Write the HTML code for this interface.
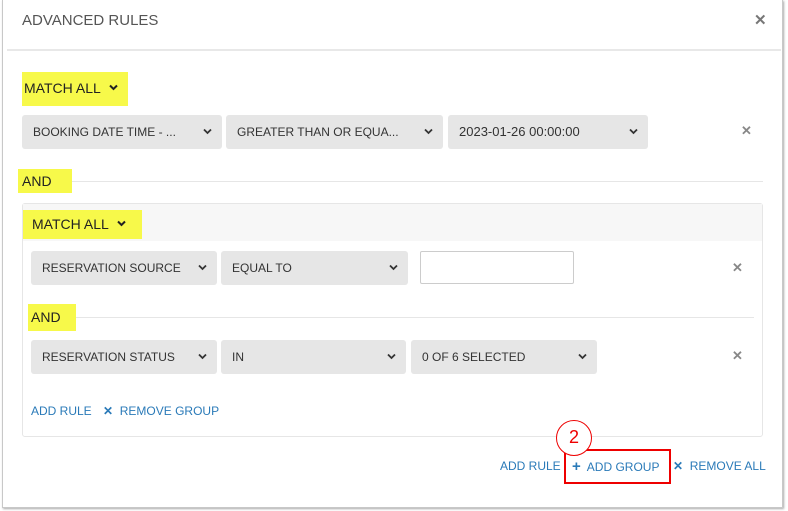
<!DOCTYPE html>
<html><head><style>
body{margin:0;width:788px;height:511px;background:#fff;font-family:"Liberation Sans",sans-serif;position:relative;overflow:hidden}
.a{position:absolute}
.modal{left:2px;top:0;width:779px;height:507px;border:1px solid #c8c8c8;border-top:none;box-shadow:1px 1px 2px #aaa}
.sel{position:absolute;height:34px;background:#e6e6e6;border-radius:3px;font-size:12px;color:#333;line-height:34px;padding-left:11px;box-sizing:border-box}
.sel svg{position:absolute;right:10px;top:13px}
.hl{position:absolute;background:#f7f94a;font-size:14px;color:#222;box-sizing:border-box;padding-left:2px}
.hl svg{margin-left:8px;vertical-align:2px}
.x{position:absolute;color:#888;font-size:13px;font-weight:bold}
.lnk{position:absolute;color:#2a7ab8;font-size:12px}
.line{position:absolute;height:1px;background:#e6e6e6}
</style></head><body>
<div class="a modal"></div>
<div class="a" style="left:22px;top:12px;font-size:15px;color:#555">ADVANCED RULES</div>
<div class="x" style="left:754px;top:11px;font-size:15px;color:#777">✕</div>
<div class="line" style="left:7px;top:49px;width:774px;height:2px;background:#e8e8e8"></div>

<div class="hl" style="left:22px;top:72px;width:106px;height:34px;line-height:32px">MATCH ALL<svg width="9" height="7"><path d="M1 1.5L4.5 5L8 1.5" stroke="#222" stroke-width="2" fill="none"/></svg></div>
<div class="sel" style="left:22px;top:115px;width:200px">BOOKING DATE TIME - ...<svg width="9" height="7"><path d="M1 1.5L4.5 5L8 1.5" stroke="#333" stroke-width="1.8" fill="none"/></svg></div>
<div class="sel" style="left:226px;top:115px;width:217px">GREATER THAN OR EQUA...<svg width="9" height="7"><path d="M1 1.5L4.5 5L8 1.5" stroke="#333" stroke-width="1.8" fill="none"/></svg></div>
<div class="sel" style="left:448px;top:115px;width:200px;font-size:13px">2023-01-26 00:00:00<svg width="9" height="7"><path d="M1 1.5L4.5 5L8 1.5" stroke="#333" stroke-width="1.8" fill="none"/></svg></div>
<div class="x" style="left:741px;top:123px">✕</div>

<div class="hl" style="left:18px;top:169px;width:54px;height:24px;line-height:24px;padding-left:4px">AND</div>
<div class="line" style="left:72px;top:181px;width:691px"></div>

<div class="a" style="left:22px;top:203px;width:741px;height:234px;border:1px solid #e6e6e6;box-sizing:border-box;border-radius:3px"></div>
<div class="a" style="left:23px;top:204px;width:739px;height:37px;background:#f7f7f7"></div>
<div class="hl" style="left:23px;top:210px;width:119px;height:29px;line-height:28px;padding-left:9px">MATCH ALL<svg width="9" height="7"><path d="M1 1.5L4.5 5L8 1.5" stroke="#222" stroke-width="2" fill="none"/></svg></div>

<div class="sel" style="left:31px;top:251px;width:186px">RESERVATION SOURCE<svg width="9" height="7"><path d="M1 1.5L4.5 5L8 1.5" stroke="#333" stroke-width="1.8" fill="none"/></svg></div>
<div class="sel" style="left:221px;top:251px;width:187px">EQUAL TO<svg width="9" height="7"><path d="M1 1.5L4.5 5L8 1.5" stroke="#333" stroke-width="1.8" fill="none"/></svg></div>
<div class="a" style="left:420px;top:251px;width:154px;height:33px;border:1px solid #ccc;box-sizing:border-box;border-radius:2px"></div>
<div class="x" style="left:732px;top:260px">✕</div>

<div class="hl" style="left:28px;top:304px;width:48px;height:27px;line-height:27px;padding-left:3px">AND</div>
<div class="line" style="left:76px;top:317px;width:678px"></div>

<div class="sel" style="left:31px;top:340px;width:186px">RESERVATION STATUS<svg width="9" height="7"><path d="M1 1.5L4.5 5L8 1.5" stroke="#333" stroke-width="1.8" fill="none"/></svg></div>
<div class="sel" style="left:221px;top:340px;width:185px">IN<svg width="9" height="7"><path d="M1 1.5L4.5 5L8 1.5" stroke="#333" stroke-width="1.8" fill="none"/></svg></div>
<div class="sel" style="left:411px;top:340px;width:186px">0 OF 6 SELECTED<svg width="9" height="7"><path d="M1 1.5L4.5 5L8 1.5" stroke="#333" stroke-width="1.8" fill="none"/></svg></div>
<div class="x" style="left:732px;top:348px">✕</div>

<div class="lnk" style="left:31px;top:404px">ADD RULE</div>
<div class="lnk" style="left:103px;top:404px"><b>✕</b>&nbsp; REMOVE GROUP</div>

<div class="lnk" style="left:500px;top:459px">ADD RULE</div>
<div class="lnk" style="left:572px;top:458px"><b style="font-size:15px">+</b>&nbsp; ADD GROUP</div>
<div class="lnk" style="left:673px;top:459px"><b>✕</b>&nbsp; REMOVE ALL</div>
<div class="a" style="left:564px;top:449px;width:107px;height:35px;border:2px solid #e00;box-sizing:border-box"></div>
<div class="a" style="left:556px;top:420px;width:36px;height:36px;border:1.5px solid #e00;border-radius:50%;background:#fff;box-sizing:border-box;color:#e00;font-size:18px;text-align:center;line-height:33px">2</div>
</body></html>
